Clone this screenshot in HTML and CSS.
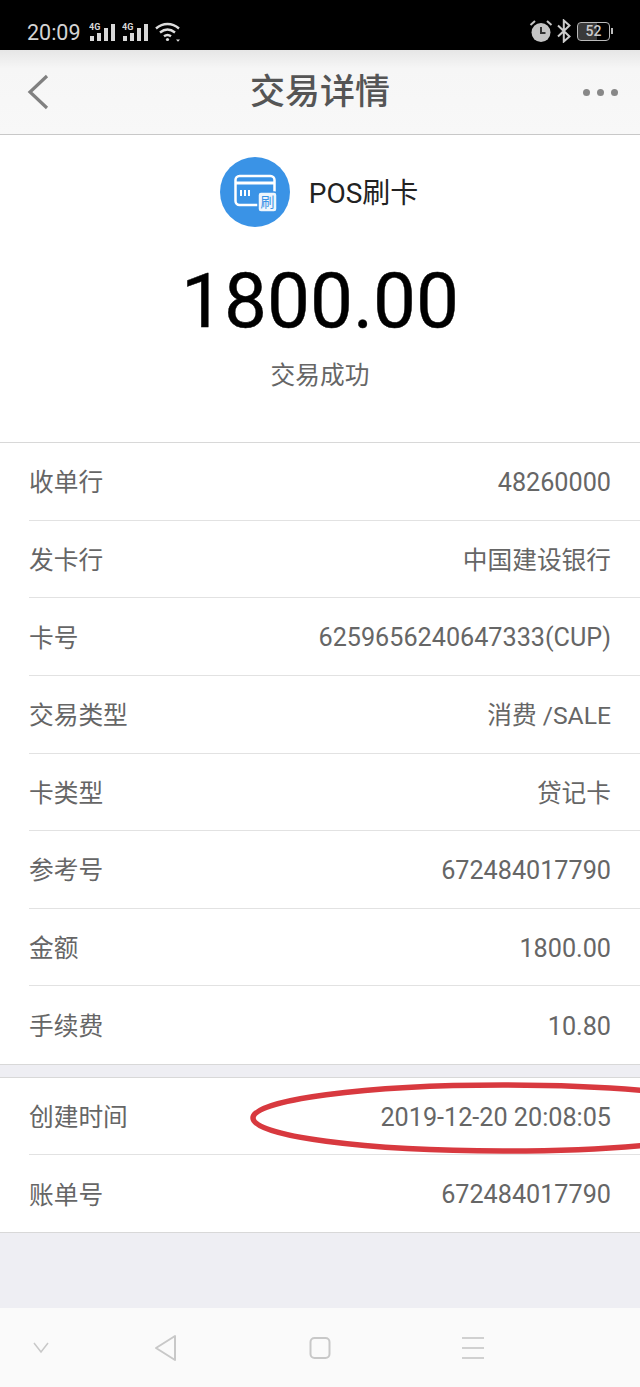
FILE: index.html
```html
<!DOCTYPE html>
<html lang="zh-CN">
<head>
  <meta charset="UTF-8" />
  <meta name="viewport" content="width=device-width, initial-scale=1.0"/>
  <title>交易详情</title>
  <link rel="stylesheet" href="styles.css">
</head>
<body>
  <div class="status-bar">
    <div class="status-left">
      <span class="clock">20:09</span>
      <svg class="signal" width="28" height="20" viewBox="0 0 28 20">
        <text x="0" y="8" class="net">4G</text>
        <rect x="1" y="14" width="4" height="5"/><rect x="8" y="11" width="4" height="8"/><rect x="15" y="6" width="4" height="13"/><rect x="22" y="2" width="4" height="17"/>
      </svg>
      <svg class="signal" width="28" height="20" viewBox="0 0 28 20">
        <text x="0" y="8" class="net">4G</text>
        <rect x="1" y="14" width="4" height="5"/><rect x="8" y="11" width="4" height="8"/><rect x="15" y="6" width="4" height="13"/><rect x="22" y="2" width="4" height="17"/>
      </svg>
      <svg class="wifi" width="26" height="20" viewBox="0 0 26 20" fill="none" stroke="#ddd" stroke-width="2.4">
        <path d="M1 6.500C8 .5 17 .5 24 6.500"/>
        <path d="M5 10.500C10 6.500 15 6.500 20 10.500"/>
        <path d="M9 14.200C11.500 12.400 13.500 12.400 16 14.200"/>
        <circle cx="12.500" cy="17.500" r="1.600" fill="#ddd" stroke="none"/>
        <path d="M21 17.500h4l-2 2.200z" fill="#ddd" stroke="none"/>
      </svg>
    </div>
    <div class="status-right">
      <svg width="24" height="24" viewBox="0 0 24 24">
        <circle cx="12" cy="13.500" r="9.500" fill="#c4c4c4"/>
        <path d="M12 8v6h4.500" fill="none" stroke="#333" stroke-width="2"/>
        <path d="M1.500 6L6 2M22.500 6L18 2" stroke="#c4c4c4" stroke-width="2"/>
      </svg>
      <svg width="16" height="24" viewBox="0 0 16 24" fill="none" stroke="#ccc" stroke-width="2">
        <path d="M2 6.500l11.500 11L7.800 22.500V1.500l5.700 5L2 17.500"/>
      </svg>
      <div class="battery">52</div>
    </div>
  </div>

  <header class="top-bar">
    <svg class="back" width="24" height="36" viewBox="0 0 24 36" fill="none" stroke="#808080" stroke-width="3.200">
      <path d="M20 2L3 18l17 16"/>
    </svg>
    <h1>交易详情</h1>
    <div class="more"><i></i><i></i><i></i></div>
  </header>

  <section class="summary">
    <div class="pay-type">
      <svg width="70" height="70" viewBox="0 0 70 70">
        <circle cx="35" cy="35" r="35" fill="#3a93e6"/>
        <rect x="15.500" y="19" width="39" height="29" rx="4" fill="none" stroke="#fff" stroke-width="2.500"/>
        <rect x="15.500" y="24.500" width="39" height="3" fill="#fff"/>
        <path d="M21 33v6M25 33v6M29 33v6" stroke="#fff" stroke-width="2"/>
        <rect x="38" y="35" width="19" height="20" rx="3" fill="#eef6fd" stroke="#3a93e6" stroke-width="1.500"/>
        <text x="47.500" y="50" class="badge-text">刷</text>
      </svg>
      <span class="pay-name">POS刷卡</span>
    </div>
    <div class="amount">1800.00</div>
    <div class="result">交易成功</div>
  </section>

  <section class="group first">
    <div class="row"><span>收单行</span><span class="num">48260000</span></div>
    <div class="row"><span>发卡行</span><span>中国建设银行</span></div>
    <div class="row"><span>卡号</span><span class="num">6259656240647333(CUP)</span></div>
    <div class="row"><span>交易类型</span><span>消费 /SALE</span></div>
    <div class="row"><span>卡类型</span><span>贷记卡</span></div>
    <div class="row"><span>参考号</span><span class="num">672484017790</span></div>
    <div class="row"><span>金额</span><span class="num">1800.00</span></div>
    <div class="row"><span>手续费</span><span class="num">10.80</span></div>
  </section>

  <section class="group second">
    <div class="row"><span>创建时间</span><span class="num">2019-12-20 20:08:05</span></div>
    <div class="row"><span>账单号</span><span class="num">672484017790</span></div>
    <svg class="circled" width="392" height="76" viewBox="0 0 392 76" fill="none">
      <ellipse cx="255" cy="38" rx="250" ry="33" stroke="#d8393f" stroke-width="5.500"/>
    </svg>
  </section>

  <div class="spacer"></div>

  <nav class="nav-bar">
    <svg class="nav-down" width="16" height="12" viewBox="0 0 16 12" fill="none" stroke="#c8c8c8" stroke-width="1.500"><path d="M1 1l7 9 7-9"/></svg>
    <svg width="24" height="28" viewBox="0 0 24 28" fill="none" stroke="#c8c8c8" stroke-width="2" stroke-linejoin="round"><path d="M21 2v24L2 14z"/></svg>
    <svg width="22" height="24" viewBox="0 0 22 24" fill="none" stroke="#c8c8c8" stroke-width="2"><rect x="1.500" y="2" width="19" height="20" rx="4"/></svg>
    <svg width="22" height="24" viewBox="0 0 22 24" fill="none" stroke="#d0d0d0" stroke-width="2"><path d="M0 2h22M0 12h22M0 22h22"/></svg>
  </nav>
</body>
</html>
```

FILE: styles.css
```css
* {
  box-sizing: border-box;
}
html, body {
  margin: 0;
  padding: 0;
}
body {
  width: 640px;
  height: 1387px;
  display: flex;
  flex-direction: column;
  overflow: hidden;
  background-color: #eeeef3;
  color: #666;
  font-family: Roboto, "Noto Sans CJK SC", sans-serif;
}
.status-bar {
  height: 50px;
  flex: none;
  display: flex;
  justify-content: space-between;
  align-items: center;
  padding: 14px 27px 0;
  background-color: #000;
}
.status-left, .status-right {
  display: flex;
  align-items: center;
}
.status-left {
  gap: 5px;
}
.status-right {
  gap: 3px;
  padding-right: 1px;
  margin-top: -2px;
  transform: translateX(-2px);
}
.clock {
  font-size: 21.500px;
  color: #d4d4d4;
  margin-right: 3px;
}
.signal rect {
  fill: #d8d8d8;
}
.net {
  font-size: 9px;
  font-weight: 700;
  fill: #d8d8d8;
}
.battery {
  position: relative;
  width: 33px;
  height: 19px;
  border: 1.500px solid #bbb;
  border-radius: 4px;
  margin-left: 2px;
  background: linear-gradient(90deg, #3a3a3a 60%, transparent 60%);
  background-clip: padding-box;
  font-size: 14px;
  font-weight: 500;
  line-height: 16px;
  color: #ccc;
  text-align: center;
}
.battery::after {
  content: "";
  position: absolute;
  right: -4px;
  top: 5px;
  width: 2px;
  height: 6px;
  background-color: #bbb;
}
.top-bar {
  height: 85px;
  flex: none;
  display: grid;
  grid-template-columns: 1fr auto 1fr;
  align-items: center;
  padding: 0 22px 0 27px;
  background: linear-gradient(#e6e6e6, #f6f6f6 22%, #f8f8f8);
  border-bottom: 1px solid #c8c8c8;
}
.top-bar h1 {
  margin: 0 5px 0 0;
  font-size: 35px;
  font-weight: 500;
  color: #555;
  line-height: 1;
}
.more {
  display: flex;
  justify-content: flex-end;
  gap: 7px;
}
.more i {
  width: 7px;
  height: 7px;
  border-radius: 50%;
  background-color: #888;
}
.summary {
  height: 308px;
  flex: none;
  background-color: #fff;
  padding-top: 22px;
  text-align: center;
  border-bottom: 1px solid #d8d8d8;
}
.pay-type {
  display: flex;
  justify-content: center;
  align-items: center;
  gap: 19px;
  height: 70px;
  padding-right: 2px;
}
.pay-name {
  font-size: 28px;
  color: #222;
  margin-top: -2px;
}
.badge-text {
  font-size: 14px;
  fill: #3a93e6;
  text-anchor: middle;
}
.amount {
  font-size: 76.500px;
  line-height: 92px;
  margin-top: 28px;
  color: #000;
  -webkit-text-stroke: .4px #000;
}
.result {
  font-size: 24.700px;
  line-height: 36px;
  margin-top: 11px;
}
.group {
  position: relative;
  flex: none;
  background-color: #fff;
  border-bottom: 1px solid #d8d8d8;
  padding-left: 29px;
}
.group.first {
  height: 622px;
  display: grid;
  grid-template-rows: repeat(8, 1fr);
}
.group.second {
  height: 156px;
  margin-top: 12px;
  border-top: 1px solid #d8d8d8;
  display: grid;
  grid-template-rows: repeat(2, 1fr);
}
.row {
  display: flex;
  justify-content: space-between;
  align-items: center;
  padding-right: 29px;
  padding-bottom: 2px;
  font-size: 24.700px;
  border-bottom: 1px solid #e2e2e2;
}
.row:last-of-type {
  border-bottom: none;
}
.num {
  font-size: 25.200px;
  margin-top: 4px;
}
.circled {
  position: absolute;
  right: 0;
  top: 2px;
}
.spacer {
  flex: 1;
}
.nav-bar {
  height: 79px;
  flex: none;
  display: flex;
  align-items: center;
  gap: 131px;
  padding-left: 33px;
  background-color: #fafafa;
}
.nav-down {
  margin-right: -26px;
}
```
